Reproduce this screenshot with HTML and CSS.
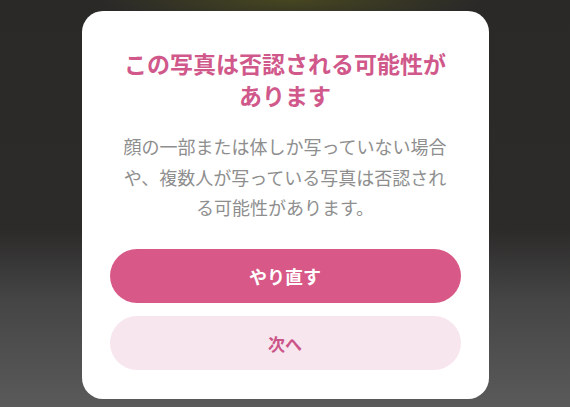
FILE: index.html
```html
<!DOCTYPE html>
<html lang="ja">
<head>
<meta charset="utf-8">
<link rel="stylesheet" href="styles.css">
</head>
<body>
<div class="screen">
  <div class="dialog">
    <h1 class="title">この写真は否認される可能性があります</h1>
    <p class="message">顔の一部または体しか写っていない場合や、複数人が写っている写真は否認される可能性があります。</p>
    <div class="actions">
      <button class="btn btn-primary">やり直す</button>
      <button class="btn btn-secondary">次へ</button>
    </div>
  </div>
</div>
</body>
</html>
```

FILE: styles.css
```css
* { box-sizing: border-box; }
html, body {
  margin: 0;
  padding: 0;
  width: 570px;
  height: 407px;
  overflow: hidden;
}
body {
  font-family: "Noto Sans CJK JP", "Noto Sans", sans-serif;
  background: #2b2a29;
}
.screen {
  width: 570px;
  height: 407px;
  padding-top: 11px;
  display: flex;
  justify-content: center;
  background:
    radial-gradient(ellipse 190px 26px at 290px 0px, rgba(72, 72, 32, 0.95), rgba(60, 58, 36, 0) 100%),
    linear-gradient(to bottom, #2a2928 0px, #2c2b2a 230px, #454545 300px, #5a5a5a 407px);
}
.dialog {
  width: 407px;
  height: 388px;
  background: #ffffff;
  border-radius: 21px;
  padding: 36px 28px 29px;
  display: flex;
  flex-direction: column;
}
.title {
  margin: 0;
  padding: 0 12px;
  font-size: 23px;
  line-height: 32px;
  font-weight: 700;
  color: #d0588a;
  text-align: center;
}
.message {
  margin: 20px 0 0;
  padding: 0 12px;
  font-size: 18px;
  line-height: 30.5px;
  color: #8e8e8e;
  text-align: center;
}
.actions {
  margin-top: auto;
  display: flex;
  flex-direction: column;
  gap: 13px;
}
.btn {
  border: none;
  height: 54px;
  border-radius: 27px;
  font-family: inherit;
  font-size: 18px;
  font-weight: 700;
  padding: 0;
  display: flex;
  align-items: center;
  justify-content: center;
}
.btn-primary {
  background: #d85887;
  color: #ffffff;
}
.btn-secondary {
  background: #f8e6ef;
  color: #cb5589;
  font-size: 17px;
}
```
